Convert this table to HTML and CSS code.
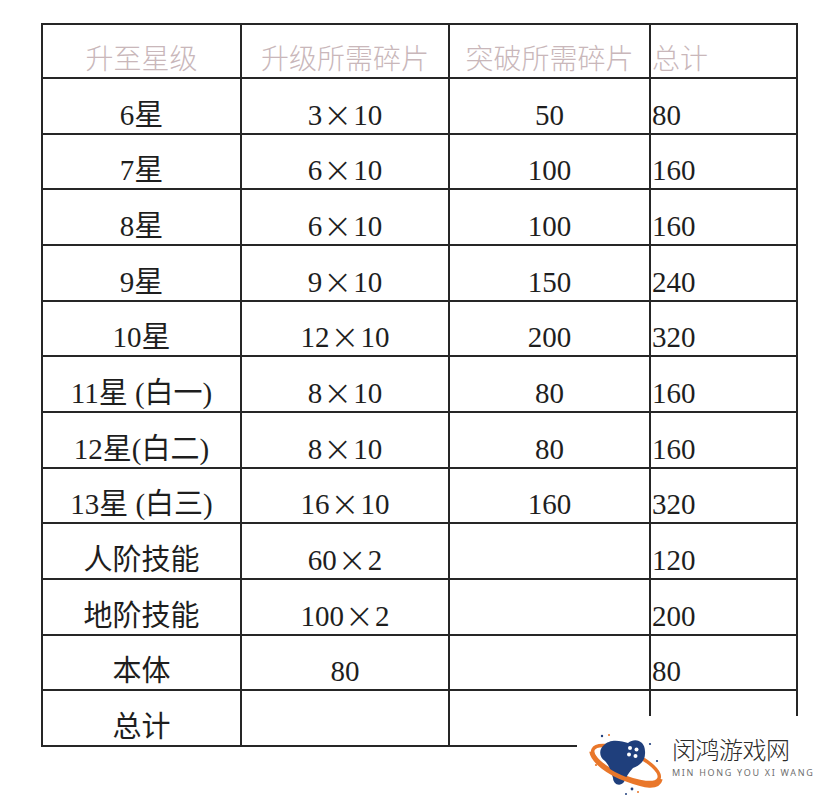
FILE: index.html
```html
<!DOCTYPE html>
<html lang="zh-CN">
<head>
<meta charset="utf-8">
<title>升星碎片表</title>
<link rel="stylesheet" href="styles.css">
</head>
<body>
<div class="sheet">
  <div class="cell head">升至星级</div>
  <div class="cell head">升级所需碎片</div>
  <div class="cell head">突破所需碎片</div>
  <div class="cell head left">总计</div>

  <div class="cell">6星</div><div class="cell">3<span class="x">×</span>10</div><div class="cell">50</div><div class="cell left">80</div>
  <div class="cell">7星</div><div class="cell">6<span class="x">×</span>10</div><div class="cell">100</div><div class="cell left">160</div>
  <div class="cell">8星</div><div class="cell">6<span class="x">×</span>10</div><div class="cell">100</div><div class="cell left">160</div>
  <div class="cell">9星</div><div class="cell">9<span class="x">×</span>10</div><div class="cell">150</div><div class="cell left">240</div>
  <div class="cell">10星</div><div class="cell">12<span class="x">×</span>10</div><div class="cell">200</div><div class="cell left">320</div>
  <div class="cell">11星 (白一)</div><div class="cell">8<span class="x">×</span>10</div><div class="cell">80</div><div class="cell left">160</div>
  <div class="cell">12星(白二)</div><div class="cell">8<span class="x">×</span>10</div><div class="cell">80</div><div class="cell left">160</div>
  <div class="cell">13星 (白三)</div><div class="cell">16<span class="x">×</span>10</div><div class="cell">160</div><div class="cell left">320</div>
  <div class="cell">人阶技能</div><div class="cell">60<span class="x">×</span>2</div><div class="cell"></div><div class="cell left">120</div>
  <div class="cell">地阶技能</div><div class="cell">100<span class="x">×</span>2</div><div class="cell"></div><div class="cell left">200</div>
  <div class="cell">本体</div><div class="cell">80</div><div class="cell"></div><div class="cell left">80</div>
  <div class="cell">总计</div><div class="cell"></div><div class="cell"></div><div class="cell left"></div>
</div>

<div class="mark">
  <svg class="logo" width="80" height="66" viewBox="0 0 80 66">
    <ellipse cx="38" cy="31" rx="36" ry="12.5" transform="rotate(24 38 31)" fill="none" stroke="#e9772a" stroke-width="3.5"/>
    <path d="M15,13 C22,5 33,8 40,10 C47,4 57,8 57,18 C58,28 51,33 45,35 C41,39 38,44 36,49 C31,55 25,50 25,45 C23,38 21,32 17,28 C11,24 11,17 15,13 Z" fill="#1f3f7c"/>
    <path d="M3.5,18.5 C5,28 20,40 40,47 C56,53 70,56 72.5,46" fill="none" stroke="#e9772a" stroke-width="4.5"/>
    <circle cx="42" cy="15" r="2" fill="#fff"/>
    <circle cx="48.5" cy="16.5" r="2" fill="#fff"/>
    <circle cx="41" cy="21.5" r="2" fill="#fff"/>
    <circle cx="47.5" cy="23" r="2" fill="#fff"/>
    <circle cx="14" cy="3" r="1.2" fill="#1f3f7c"/>
    <circle cx="21" cy="2" r="1" fill="#e9772a"/>
    <circle cx="62" cy="11" r="1.1" fill="#1f3f7c"/>
    <circle cx="69" cy="28" r="1.1" fill="#1f3f7c"/>
    <circle cx="8" cy="32" r="1.1" fill="#e9772a"/>
    <circle cx="44" cy="56" r="1.4" fill="#1f3f7c"/>
    <circle cx="50" cy="59" r="1" fill="#e9772a"/>
    <circle cx="38" cy="61" r="1" fill="#1f3f7c"/>
  </svg>
  <div class="brand">
    <div class="brand-cn">闵鸿游戏网</div>
    <div class="brand-en">MIN HONG YOU XI WANG</div>
  </div>
</div>
</body>
</html>
```

FILE: styles.css
```css
html, body {
  margin: 0;
  padding: 0;
  background: #ffffff;
}

body {
  position: relative;
  width: 826px;
  height: 800px;
  overflow: hidden;
  font-family: "Liberation Serif", "Noto Sans CJK SC", serif;
  color: #1e1e1e;
}

.sheet {
  display: grid;
  grid-template-columns: 199px 208px 201px 147px;
  grid-template-rows: 54px repeat(12, 55.67px);
  width: max-content;
  margin: 23px 0 0 41px;
  border-top: 2px solid #262626;
  border-left: 2px solid #262626;
}

.cell {
  box-sizing: border-box;
  border-right: 2px solid #262626;
  border-bottom: 2px solid #262626;
  display: flex;
  align-items: center;
  justify-content: center;
  padding-top: 18px;
  font-size: 29px;
  line-height: 30px;
  white-space: nowrap;
}

.cell.left {
  justify-content: flex-start;
  padding-left: 1px;
}

.cell.head {
  font-family: "Noto Sans CJK SC", sans-serif;
  font-weight: 300;
  font-size: 28px;
  color: #c9b7ba;
  padding-top: 12px;
}

.x {
  display: inline-block;
  width: 31px;
  text-align: center;
  font-family: "DejaVu Sans", sans-serif;
  font-weight: 300;
  font-size: 35px;
  line-height: 30px;
}

.mark {
  position: absolute;
  left: 577px;
  top: 716px;
  width: 249px;
  height: 84px;
  background: #ffffff;
  display: flex;
  align-items: flex-start;
}

.logo {
  margin: 17px 0 0 11px;
  flex: none;
}

.brand {
  margin: 18px 0 0 4px;
  display: flex;
  flex-direction: column;
}

.brand-cn {
  font-family: "Noto Sans CJK SC", sans-serif;
  font-weight: 300;
  font-size: 24px;
  line-height: 30px;
  letter-spacing: -0.5px;
  color: #2b2b2b;
}

.brand-en {
  font-family: "Noto Sans", sans-serif;
  font-size: 9px;
  line-height: 12px;
  letter-spacing: 1.7px;
  white-space: nowrap;
  color: #6f6f6f;
  margin-top: 3px;
}
```
